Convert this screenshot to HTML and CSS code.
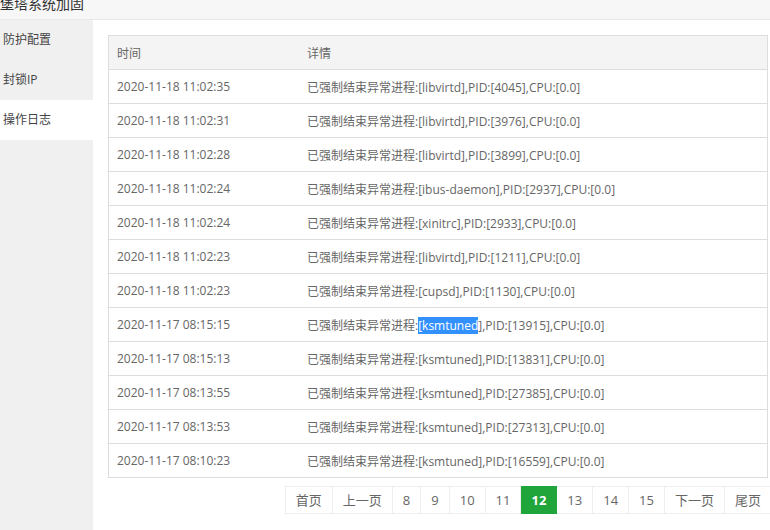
FILE: index.html
```html
<!DOCTYPE html>
<html lang="zh-CN">
<head>
  <meta charset="UTF-8" />
  <title>堡塔系统加固</title>
  <link rel="stylesheet" href="styles.css">
</head>
<body>
  <div class="title-bar"><span class="title">堡塔系统加固</span></div>
  <div class="layout">
    <ul class="side-menu">
      <li>防护配置</li>
      <li>封锁IP</li>
      <li class="active">操作日志</li>
    </ul>
    <div class="main">
      <table class="log-table">
        <thead>
          <tr><th class="col-time">时间</th><th>详情</th></tr>
        </thead>
        <tbody>
          <tr><td>2020-11-18 11:02:35</td><td>已强制结束异常进程:[libvirtd],PID:[4045],CPU:[0.0]</td></tr>
          <tr><td>2020-11-18 11:02:31</td><td>已强制结束异常进程:[libvirtd],PID:[3976],CPU:[0.0]</td></tr>
          <tr><td>2020-11-18 11:02:28</td><td>已强制结束异常进程:[libvirtd],PID:[3899],CPU:[0.0]</td></tr>
          <tr><td>2020-11-18 11:02:24</td><td>已强制结束异常进程:[ibus-daemon],PID:[2937],CPU:[0.0]</td></tr>
          <tr><td>2020-11-18 11:02:24</td><td>已强制结束异常进程:[xinitrc],PID:[2933],CPU:[0.0]</td></tr>
          <tr><td>2020-11-18 11:02:23</td><td>已强制结束异常进程:[libvirtd],PID:[1211],CPU:[0.0]</td></tr>
          <tr><td>2020-11-18 11:02:23</td><td>已强制结束异常进程:[cupsd],PID:[1130],CPU:[0.0]</td></tr>
          <tr><td>2020-11-17 08:15:15</td><td>已强制结束异常进程:<span class="selected">[ksmtuned</span>],PID:[13915],CPU:[0.0]</td></tr>
          <tr><td>2020-11-17 08:15:13</td><td>已强制结束异常进程:[ksmtuned],PID:[13831],CPU:[0.0]</td></tr>
          <tr><td>2020-11-17 08:13:55</td><td>已强制结束异常进程:[ksmtuned],PID:[27385],CPU:[0.0]</td></tr>
          <tr><td>2020-11-17 08:13:53</td><td>已强制结束异常进程:[ksmtuned],PID:[27313],CPU:[0.0]</td></tr>
          <tr><td>2020-11-17 08:10:23</td><td>已强制结束异常进程:[ksmtuned],PID:[16559],CPU:[0.0]</td></tr>
        </tbody>
      </table>
      <div class="pager">
        <a>首页</a>
        <a>上一页</a>
        <a>8</a>
        <a>9</a>
        <a>10</a>
        <a>11</a>
        <a class="current">12</a>
        <a>13</a>
        <a>14</a>
        <a>15</a>
        <a>下一页</a>
        <a>尾页</a>
      </div>
    </div>
  </div>
</body>
</html>
```

FILE: styles.css
```css
body {
  margin: 0;
  font-family: "Open Sans", "Noto Sans CJK SC", sans-serif;
  font-size: 12px;
  color: #666;
  background: #fff;
  height: 530px;
  overflow: hidden;
}
.title-bar {
  height: 19px;
  background: #f7f7f7;
  border-bottom: 1px solid #e8e8e8;
  overflow: hidden;
}
.title {
  display: block;
  font-size: 14px;
  line-height: 14px;
  margin-top: -3px;
  color: #333;
}
.layout {
  display: flex;
  height: 510px;
}
.side-menu {
  list-style: none;
  margin: 0;
  padding: 0;
  width: 93px;
  background: #f0f0f0;
}
.side-menu li {
  height: 40px;
  line-height: 40px;
  padding-left: 3px;
  color: #444;
}
.side-menu li.active {
  background: #fff;
}
.main {
  flex: 1;
  padding: 15px 2px 0 15px;
}

/* log table */
.log-table {
  width: 100%;
  border-collapse: collapse;
  border: 1px solid #ddd;
}
.log-table th,
.log-table td {
  height: 33px;
  padding: 0 8px;
  text-align: left;
  font-weight: normal;
  border-bottom: 1px solid #ddd;
  white-space: nowrap;
}
.log-table th {
  background: #f4f4f4;
}
.log-table .col-time {
  width: 174px;
}
.selected {
  background: #3390ff;
  color: #fff;
}

/* pager */
.pager {
  display: flex;
  justify-content: flex-end;
  margin: 8px -4px 0 0;
}
.pager a {
  height: 26px;
  line-height: 26px;
  padding: 0 10px;
  font-size: 13px;
  border: 1px solid #eee;
  border-left: none;
  color: #666;
}
.pager a:first-child {
  border-left: 1px solid #eee;
}
.pager a.current {
  background: #20a53a;
  border-color: #20a53a;
  color: #fff;
  font-weight: bold;
}
```
